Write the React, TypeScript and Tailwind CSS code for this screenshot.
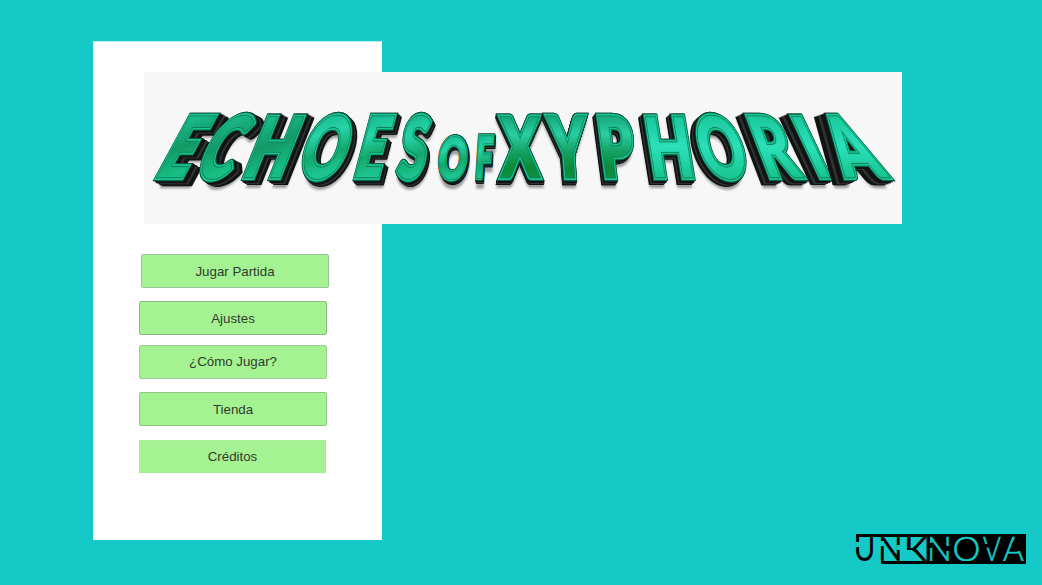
import React from "react";

type Glyph = {
  ch: string;
  x: number; // left end of the base edge
  w: number; // width of the letter box
  skew: number; // how far the top edge moves to the right
  top: number;
  bottom: number;
  depth?: [number, number];
};

const TITLE: Glyph[] = [
  { ch: "E", x: 152, w: 31, skew: 37, top: 113, bottom: 181, depth: [9, 5] },
  { ch: "C", x: 188, w: 39, skew: 36, top: 112, bottom: 183, depth: [8, 4.5] },
  { ch: "H", x: 240, w: 41, skew: 27, top: 113, bottom: 181, depth: [7, 4.5] },
  { ch: "O", x: 293, w: 46, skew: 22, top: 112, bottom: 183, depth: [4.5, 4.5] },
  { ch: "E", x: 352, w: 28, skew: 18, top: 113, bottom: 181, depth: [4, 4.5] },
  { ch: "S", x: 393, w: 30, skew: 12, top: 112, bottom: 183, depth: [2.5, 4.5] },
  { ch: "O", x: 436, w: 30, skew: 4, top: 134, bottom: 182, depth: [1.5, 3] },
  { ch: "F", x: 475, w: 17, skew: 3, top: 134, bottom: 181, depth: [1, 3] },
  { ch: "X", x: 498, w: 45, skew: -1, top: 113, bottom: 181, depth: [-0.5, 4.5] },
  { ch: "Y", x: 549, w: 43, skew: -5, top: 113, bottom: 181, depth: [-1.5, 4.5] },
  { ch: "P", x: 604, w: 36, skew: -9, top: 113, bottom: 181, depth: [-3, 4.5] },
  { ch: "H", x: 653, w: 43, skew: -11, top: 113, bottom: 181, depth: [-4.5, 4.5] },
  { ch: "O", x: 708, w: 47, skew: -21, top: 112, bottom: 183, depth: [-5, 4.5] },
  { ch: "R", x: 769, w: 39, skew: -26, top: 113, bottom: 181, depth: [-8, 4.5] },
  { ch: "I", x: 819, w: 15, skew: -32, top: 113, bottom: 181, depth: [-9, 4.5] },
  { ch: "A", x: 845, w: 50, skew: -38, top: 113, bottom: 181, depth: [-11, 4.5] },
];

const STUDIO: (Glyph & { dark?: boolean })[] = [
  { ch: "U", x: 856, w: 17, skew: 0, top: 534, bottom: 561, dark: true },
  { ch: "N", x: 881, w: 19, skew: 0, top: 536, bottom: 561, dark: true },
  { ch: "K", x: 907, w: 21, skew: 0, top: 536, bottom: 562, dark: true },
  { ch: "N", x: 930, w: 19, skew: 0, top: 537, bottom: 561 },
  { ch: "O", x: 954, w: 25, skew: 0, top: 536, bottom: 562 },
  { ch: "V", x: 983, w: 18, skew: 0, top: 537, bottom: 561 },
  { ch: "A", x: 1003, w: 21, skew: 0, top: 537, bottom: 561 },
];

const ctx = document.createElement("canvas").getContext("2d")!;

// Matrix that carries the ink box of a letter, grown by pad, onto its slanted box.
function fit(g: Glyph, weight: number, pad = 0) {
  ctx.font = `${weight} 100px Lato`;
  const m = ctx.measureText(g.ch);
  const l = -m.actualBoundingBoxLeft - pad;
  const r = m.actualBoundingBoxRight + pad;
  const up = m.actualBoundingBoxAscent + pad;
  const down = m.actualBoundingBoxDescent + pad;
  const sx = g.w / (r - l);
  const sy = (g.bottom - g.top) / (up + down);
  const k = -g.skew / (up + down);
  return `matrix(${sx} 0 ${k} ${sy} ${g.x - l * sx - k * down} ${g.bottom - down * sy})`;
}

const STEPS = [1, 0.88, 0.75, 0.62, 0.5, 0.38, 0.25, 0.12];
const PAD = 5;

function Title() {
  return (
    <svg viewBox="144 72 758 152" className="block h-full w-full overflow-visible" aria-label="Echoes of Xyphoria">
      <defs>
        <linearGradient id="face" gradientUnits="userSpaceOnUse" x1="0" y1="-74" x2="15" y2="0">
          <stop offset="0" stopColor="#16b58c" />
          <stop offset="0.35" stopColor="#27d3a8" />
          <stop offset="0.7" stopColor="#14a96c" />
          <stop offset="1" stopColor="#1cc390" />
        </linearGradient>
        <linearGradient id="faceLeft" gradientUnits="userSpaceOnUse" x1="0" y1="-74" x2="20" y2="0">
          <stop offset="0" stopColor="#1cbe90" />
          <stop offset="0.55" stopColor="#139a66" />
          <stop offset="1" stopColor="#17bd83" />
        </linearGradient>
        <linearGradient id="faceMid" gradientUnits="userSpaceOnUse" x1="0" y1="-74" x2="0" y2="0">
          <stop offset="0" stopColor="#14a878" />
          <stop offset="0.3" stopColor="#2ccda3" />
          <stop offset="0.6" stopColor="#159f60" />
          <stop offset="0.85" stopColor="#0b8b38" />
          <stop offset="1" stopColor="#0d8e43" />
        </linearGradient>
        <linearGradient id="faceRight" gradientUnits="userSpaceOnUse" x1="0" y1="-74" x2="0" y2="0">
          <stop offset="0" stopColor="#1bc79c" />
          <stop offset="0.5" stopColor="#2be0ba" />
          <stop offset="1" stopColor="#18c590" />
        </linearGradient>
        <filter id="soft" x="-5%" y="-20%" width="110%" height="140%">
          <feGaussianBlur stdDeviation="1.3" />
        </filter>
      </defs>
      <g filter="url(#soft)" opacity="0.5" aria-hidden="true">
        {TITLE.map((g, i) => (
          <g key={i} transform={`translate(${g.depth![0] * 0.8} 7.5)`}>
            <text
              transform={fit(g, 900, PAD)}
              stroke="#444444"
              strokeWidth={PAD * 2}
              className="fill-[#444444] font-['Lato',sans-serif] text-[100px] font-black"
            >
              {g.ch}
            </text>
          </g>
        ))}
      </g>
      {TITLE.map((g, i) => {
        const t = fit(g, 900, PAD);
        const fill =
          i < 3 ? "url(#faceLeft)" : i >= 8 && i <= 10 ? "url(#faceMid)" : i > 10 ? "url(#faceRight)" : "url(#face)";
        return (
          <g key={i} className="font-['Lato',sans-serif] text-[100px] font-black" strokeLinejoin="miter">
            {STEPS.map((s, n) => {
              const side = n === 3 || n === 4 ? "#2f3332" : "#121414";
              return (
                <g key={n} transform={`translate(${g.depth![0] * s} ${g.depth![1] * s})`} aria-hidden="true">
                  <text transform={t} fill={side} stroke={side} strokeWidth={PAD * 2}>
                    {g.ch}
                  </text>
                </g>
              );
            })}
            <text transform={t} fill="#075e42" stroke="#075e42" strokeWidth={PAD * 2}>
              {g.ch}
            </text>
            <text transform={t} fill="#1ac594" stroke="#1ac594" strokeWidth="7.2">
              {g.ch}
            </text>
            <text transform={t} fill="#0b8059" stroke="#0b8059" strokeWidth="3.2">
              {g.ch}
            </text>
            <text transform={t} fill={fill} stroke={fill} strokeWidth="0.8">
              {g.ch}
            </text>
          </g>
        );
      })}
    </svg>
  );
}

function StudioLogo() {
  return (
    <svg viewBox="856 534 170 30" className="block h-[30px] w-[170px] overflow-visible" aria-label="Unknova">
      <rect x="856" y="534" width="170" height="3" fill="#000" />
      <rect x="926.5" y="534" width="99.5" height="30" fill="#000" />
      {STUDIO.map((g, i) => (
        <text
          key={i}
          transform={fit(g, g.dark ? 400 : 300, g.dark ? 0 : 1)}
          stroke={g.dark ? "none" : "#15cac6"}
          strokeWidth={g.dark ? 0 : 2}
          className={
            g.dark
              ? "fill-black font-['Lato',sans-serif] text-[100px] font-normal"
              : "fill-[#15cac6] font-['Lato',sans-serif] text-[100px] font-light"
          }
        >
          {g.ch}
        </text>
      ))}
      <g fill="#15cac6">
        <rect x="855" y="542" width="5" height="5" />
        <rect x="880" y="541" width="4" height="5" />
        <rect x="896.5" y="545" width="4" height="5" />
        <rect x="906" y="550" width="6" height="11" />
      </g>
      <rect x="881" y="561" width="145" height="3" fill="#000" />
      <g fill="#000">
        <rect x="929" y="543" width="3.5" height="5" />
        <rect x="946" y="546" width="4" height="5" />
        <rect x="983" y="544" width="6.5" height="3.5" />
        <polygon points="1015.5,536 1026,536 1026,551 1010,551" />
      </g>
    </svg>
  );
}

const BUTTONS = [
  { label: "Jugar Partida", cls: "ml-[48px] h-[34px] w-[188px] rounded-[2px] border-[#9bc596] pt-[2px]" },
  { label: "Ajustes", cls: "mt-[13px] ml-[46px] h-[34px] w-[188px] rounded-[2px] border-[#8db987] pt-[2px]" },
  { label: "¿Cómo Jugar?", cls: "mt-[10px] ml-[46px] h-[34px] w-[188px] rounded-[2px] border-[#9fca98]" },
  { label: "Tienda", cls: "mt-[13px] ml-[46px] h-[34px] w-[188px] rounded-[2px] border-[#8fc586] pt-[2px]" },
  { label: "Créditos", cls: "mt-[14px] ml-[46px] h-[33px] w-[187px] border-[#a4ec95]" },
];

export default function App() {
  return (
    <div className="relative h-[585px] w-[1042px] overflow-hidden bg-[#15cac6] pt-[41px] pl-[93px] font-['Liberation_Sans',sans-serif]">
      <main className="flex h-[499px] w-[289px] flex-col border-t border-[#b4eeed] bg-white pt-[212px]">
        {BUTTONS.map((b) => (
          <button
            key={b.label}
            className={`flex shrink-0 items-center justify-center border bg-[#a5f292] text-[13.3px] leading-none text-[#303b2d] ${b.cls}`}
          >
            {b.label}
          </button>
        ))}
      </main>
      <header className="absolute top-[72px] left-[144px] h-[152px] w-[758px] bg-[#f7f7f7]">
        <Title />
      </header>
      <footer className="absolute top-[534px] left-[856px]">
        <StudioLogo />
      </footer>
    </div>
  );
}
